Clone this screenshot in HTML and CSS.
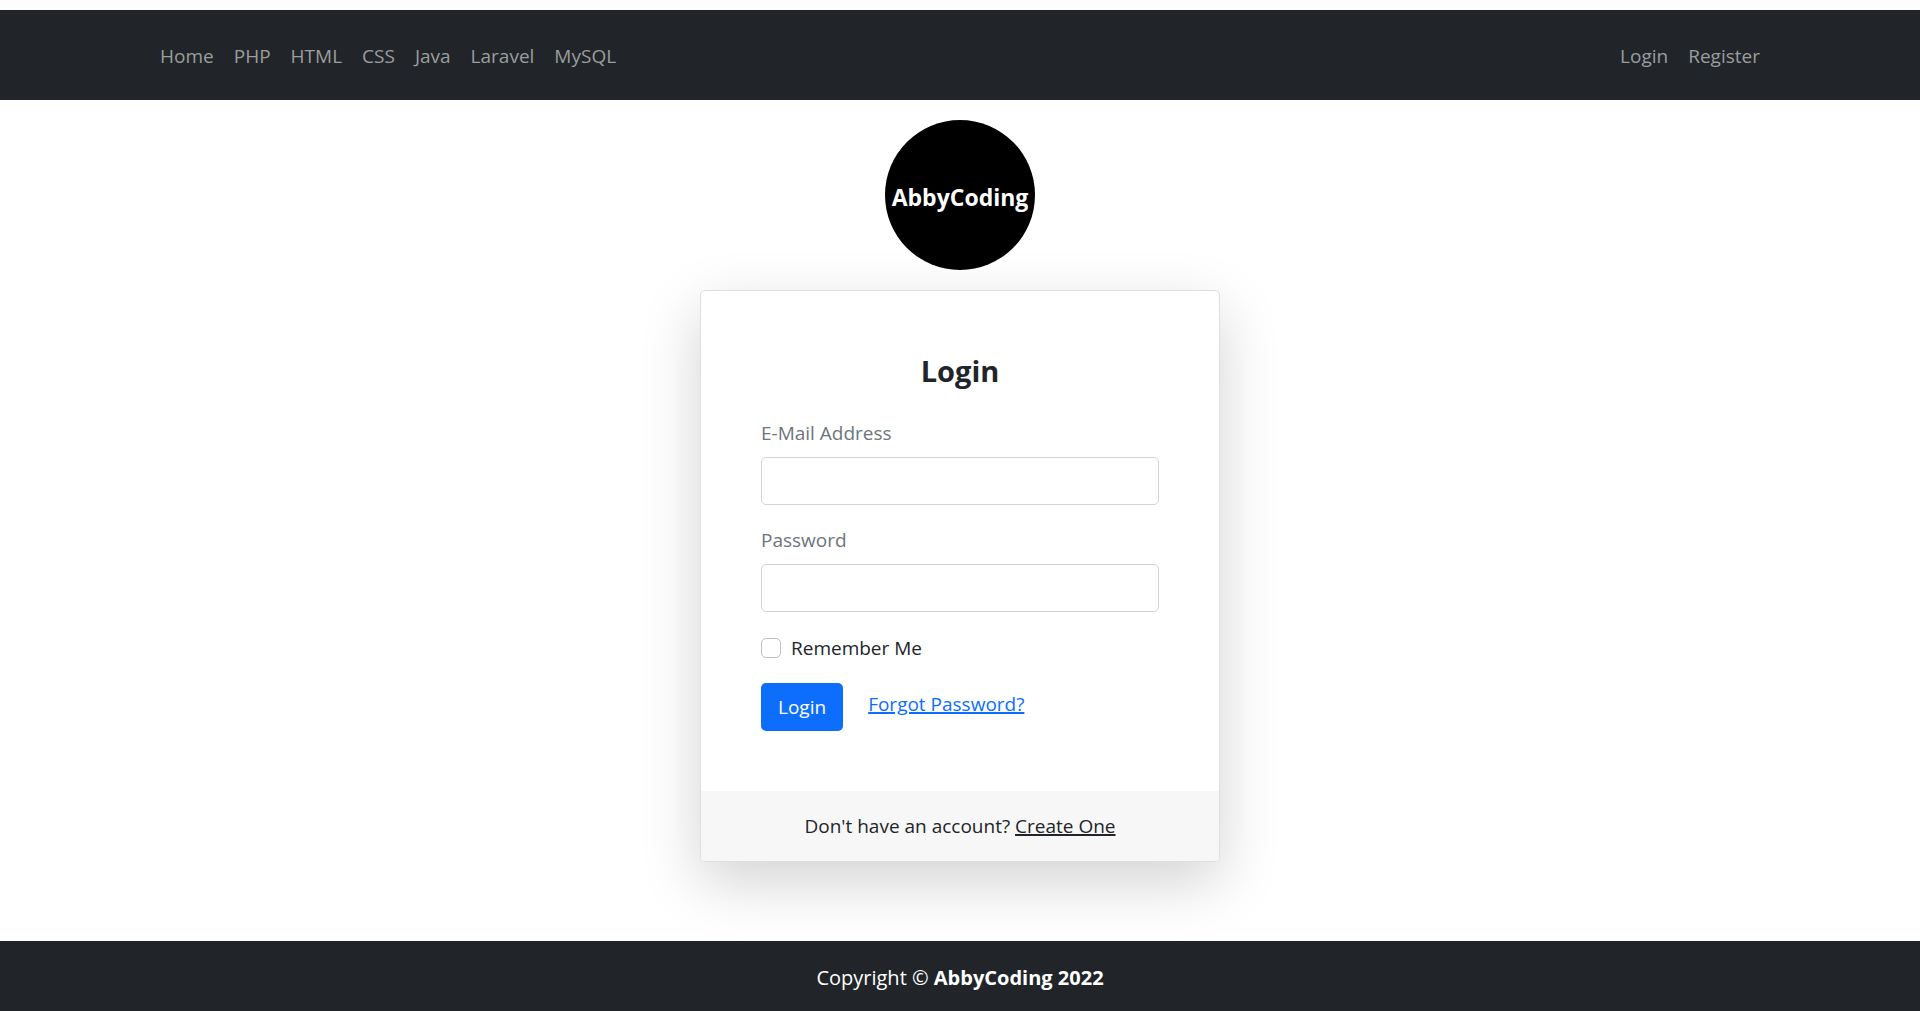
FILE: index.html
```html
<!DOCTYPE html>
<html lang="en">
<head>
<meta charset="utf-8">
<meta name="viewport" content="width=device-width, initial-scale=1">
<title>Login - AbbyCoding</title>
<link rel="stylesheet" href="styles.css">
</head>
<body>
<header class="site-header">
  <nav class="container navbar">
    <ul class="nav-list">
      <li><a href="#">Home</a></li>
      <li><a href="#">PHP</a></li>
      <li><a href="#">HTML</a></li>
      <li><a href="#">CSS</a></li>
      <li><a href="#">Java</a></li>
      <li><a href="#">Laravel</a></li>
      <li><a href="#">MySQL</a></li>
    </ul>
    <ul class="nav-list">
      <li><a href="#">Login</a></li>
      <li><a href="#">Register</a></li>
    </ul>
  </nav>
</header>
<main class="page">
  <div class="logo">AbbyCoding</div>
  <section class="card">
    <form class="card-body">
      <h1 class="card-title">Login</h1>
      <div class="field">
        <label for="email">E-Mail Address</label>
        <input class="text-input" id="email" type="email">
      </div>
      <div class="field">
        <label for="password">Password</label>
        <input class="text-input" id="password" type="password">
      </div>
      <div class="check">
        <input class="check-input" id="remember" type="checkbox">
        <label for="remember">Remember Me</label>
      </div>
      <div class="actions">
        <button class="btn" type="submit">Login</button>
        <a class="forgot" href="#">Forgot Password?</a>
      </div>
    </form>
    <div class="card-footer">Don't have an account? <a href="#">Create One</a></div>
  </section>
</main>
<footer class="site-footer">Copyright © <strong>AbbyCoding 2022</strong></footer>
</body>
</html>
```
FILE: styles.css
```css
* { box-sizing: border-box; }

body {
  margin: 0;
  min-height: 100vh;
  display: flex;
  flex-direction: column;
  border-top: 10px solid #fdfdfe;
  background: #fff;
  color: #212529;
  font: 19px/30px "Segoe UI", "Open Sans", "Noto Sans", sans-serif;
}

a { text-decoration-thickness: 2px; }

.site-header { background: #212529; padding: 21px 0 19px; }
.container { width: 100%; max-width: 1650px; margin: 0 auto; padding: 0 15px; }
.navbar { display: flex; justify-content: space-between; }
.nav-list { display: flex; margin: 0; padding: 0; list-style: none; }
.nav-list a { display: block; padding: 10px; color: #9b9d9e; text-decoration: none; }

.page { flex: 1; display: flex; flex-direction: column; align-items: center; padding: 20px 0; }

.logo {
  display: flex;
  align-items: center;
  justify-content: center;
  width: 150px;
  height: 150px;
  margin-bottom: 20px;
  padding-top: 3px;
  border-radius: 50%;
  background: #000;
  color: #fff;
  font-size: 23px;
  font-weight: 700;
}

.card {
  width: 100%;
  max-width: 520px;
  overflow: hidden;
  border: 1px solid #dfdfdf;
  border-radius: 5px;
  background: #fff;
  box-shadow: 0 20px 60px rgba(0, 0, 0, 0.175);
}
.card-body { padding: 60px; }
.card-title { margin: 0 0 27px; font-size: 29px; line-height: 40px; text-align: center; }
.field { margin-bottom: 20px; }
.field label { display: block; margin-bottom: 9px; color: #6c757d; }
.text-input {
  display: block;
  width: 100%;
  height: 48px;
  padding: 8px 15px;
  border: 1px solid #ced4da;
  border-radius: 5px;
  background: #fff;
  color: inherit;
  font: inherit;
}
.check { display: flex; align-items: center; gap: 10px; margin-bottom: 20px; }
.check label { padding-top: 1px; }
.check-input {
  appearance: none;
  width: 20px;
  height: 20px;
  margin: 0;
  border: 1px solid #bfbfbf;
  border-radius: 5px;
  background: #fff;
}
.check-input:checked { background: #0d6efd; }
.actions { display: flex; align-items: flex-start; gap: 25px; }
.btn {
  height: 48px;
  padding: 9px 17px;
  border: 0;
  border-radius: 5px;
  background: #0d6efd;
  color: #fff;
  font: inherit;
}
.forgot { padding-top: 6px; color: #0d6efd; }
.card-footer { padding: 20px; background: #f7f7f7; text-align: center; }
.card-footer a { color: inherit; }

.site-footer { padding: 22px 20px 18px; background: #212529; color: #fff; font-size: 20px; text-align: center; }
```
